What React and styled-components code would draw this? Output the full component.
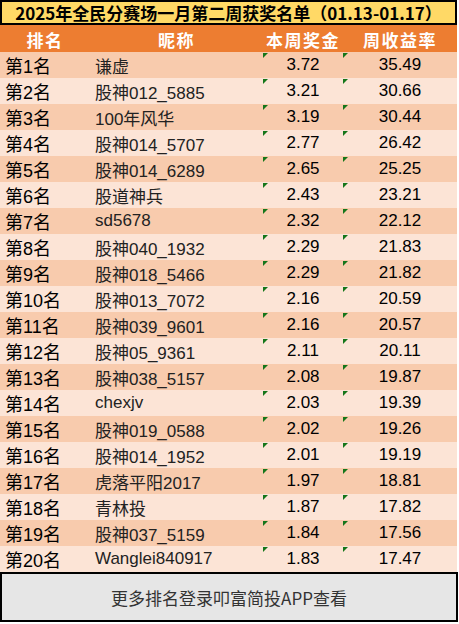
import React from 'react'
import styled, { createGlobalStyle } from 'styled-components'

const GlobalStyle = createGlobalStyle`
  html, body {
    margin: 0;
    padding: 0;
    background: #ffffff;
  }
`

const COLS = '90px 173px 80px 114px'

const rows = [
    ['谦虚', '3.72', '35.49'],
    ['股神012_5885', '3.21', '30.66'],
    ['100年风华', '3.19', '30.44'],
    ['股神014_5707', '2.77', '26.42'],
    ['股神014_6289', '2.65', '25.25'],
    ['股道神兵', '2.43', '23.21'],
    ['sd5678', '2.32', '22.12'],
    ['股神040_1932', '2.29', '21.83'],
    ['股神018_5466', '2.29', '21.82'],
    ['股神013_7072', '2.16', '20.59'],
    ['股神039_9601', '2.16', '20.57'],
    ['股神05_9361', '2.11', '20.11'],
    ['股神038_5157', '2.08', '19.87'],
    ['chexjv', '2.03', '19.39'],
    ['股神019_0588', '2.02', '19.26'],
    ['股神014_1952', '2.01', '19.19'],
    ['虎落平阳2017', '1.97', '18.81'],
    ['青林投', '1.87', '17.82'],
    ['股神037_5159', '1.84', '17.56'],
    ['Wanglei840917', '1.83', '17.47'],
]

const Sheet = styled.div`
    width: 457px;
    display: flex;
    flex-direction: column;
`

const Title = styled.div`
    height: 21px;
    border: 2px solid #000;
    background: #ffd966;
    display: flex;
    align-items: center;
    justify-content: center;
    font-family: "Noto Sans CJK SC", "Liberation Sans", sans-serif;
    font-weight: 700;
    font-size: 17px;
    color: #000;
    white-space: nowrap;
`

const HeaderRow = styled.div`
    display: grid;
    grid-template-columns: ${COLS};
    height: 27px;
    background: #ed7d31;
`

const HeadCell = styled.div`
    display: flex;
    align-items: center;
    justify-content: center;
    color: #fff;
    font-family: "Noto Sans CJK SC", sans-serif;
    font-weight: 700;
    font-size: 17px;
    letter-spacing: 1.5px;
    padding-top: 1px;
`

const Row = styled.div`
    display: grid;
    grid-template-columns: ${COLS};
    height: 26px;
    background: ${p => (p.$odd ? '#f8cbad' : '#fce4d6')};
`

const Cell = styled.div`
    position: relative;
    display: flex;
    align-items: center;
    justify-content: ${p => p.$align || 'flex-start'};
    padding-left: ${p => p.$pad || 0}px;
    font-family: "Liberation Sans", "Noto Sans CJK SC", sans-serif;
    font-size: ${p => p.$size || 17}px;
    color: ${p => p.$color || '#000'};
    white-space: nowrap;
`

const Flag = styled.span`
    position: absolute;
    top: 1px;
    left: 0;
    width: 0;
    height: 0;
    border-top: 5px solid #15761a;
    border-right: 5px solid transparent;
`

const Footer = styled.div`
    height: 46px;
    border: 2px solid #000;
    width: 454px;
    background: #e6e6e6;
    display: flex;
    align-items: center;
    justify-content: center;
    font-family: "Noto Sans CJK SC", "Liberation Sans", sans-serif;
    font-size: 17px;
    color: #333;
`

export default function App() {
    return (
        <>
            <GlobalStyle />
            <Sheet>
                <Title>2025年全民分赛场一月第二周获奖名单（01.13-01.17）</Title>
                <HeaderRow>
                    <HeadCell>排名</HeadCell>
                    <HeadCell>昵称</HeadCell>
                    <HeadCell>本周奖金</HeadCell>
                    <HeadCell>周收益率</HeadCell>
                </HeaderRow>
                {rows.map((r, i) => (
                    <Row key={i} $odd={i % 2 === 0}>
                        <Cell $pad={5} $size={18}>第{i + 1}名</Cell>
                        <Cell $pad={5} $color="#222">{r[0]}</Cell>
                        <Cell $align="center"><Flag />{r[1]}</Cell>
                        <Cell $align="center"><Flag />{r[2]}</Cell>
                    </Row>
                ))}
                <Footer>更多排名登录叩富简投APP查看</Footer>
            </Sheet>
        </>
    )
}
